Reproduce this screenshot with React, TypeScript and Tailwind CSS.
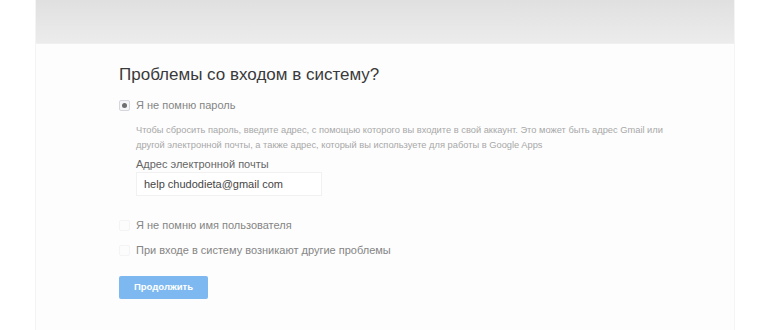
import { useState } from 'react'

const options = [
  { id: 'password', label: 'Я не помню пароль' },
  { id: 'username', label: 'Я не помню имя пользователя' },
  { id: 'other', label: 'При входе в систему возникают другие проблемы' },
]

function Radio({ checked }: { checked: boolean }) {
  return (
    <span
      className={`flex h-[11px] w-[11px] items-center justify-center rounded-[2px] border ${
        checked ? 'border-[#d6d6de] bg-[#f6f6f8]' : 'border-[#f4f4f4] bg-[#fcfcfc]'
      }`}
    >
      {checked && <span className="h-[5px] w-[5px] rounded-full bg-[#6f6f6f]" />}
    </span>
  )
}

export default function App() {
  const [choice, setChoice] = useState('password')
  const [email, setEmail] = useState('help chudodieta@gmail com')

  return (
    <div className="h-[330px] w-[770px] bg-white" style={{ fontFamily: '"Liberation Sans", Arial, sans-serif' }}>
      <div className="mx-auto h-full w-[700px] border-x border-[#f4f4f4] bg-[#fdfdfd]">
        <div className="h-[44px] border-b border-[#f0f0f0] bg-gradient-to-b from-[#e0e0e0] to-[#ececec]" />

        <div className="pl-[83px] pt-[20px]">
          <h1 className="text-[17px] leading-[22px] text-[#3a3a3a]">Проблемы со входом в систему?</h1>

          <div className="mt-[12px]">
            {options.map((o) => (
              <div key={o.id} className={o.id === 'password' ? '' : 'mt-[11px]'}>
                <label className="flex h-[14px] cursor-pointer items-center gap-[6px]" onClick={() => setChoice(o.id)}>
                  <Radio checked={choice === o.id} />
                  <span className="text-[11px] text-[#858585]">{o.label}</span>
                </label>

                {o.id === 'password' && choice === 'password' && (
                  <div className="mb-[22px] pl-[17px] pt-[11px]">
                    <p className="whitespace-nowrap text-[9.3px] leading-[15px] text-[#a8a8a8]">
                      Чтобы сбросить пароль, введите адрес, с помощью которого вы входите в свой аккаунт. Это может быть адрес Gmail или
                      <br />
                      другой электронной почты, а также адрес, который вы используете для работы в Google Apps
                    </p>
                    <div className="mt-[4px] text-[11px] leading-[14px] text-[#666]">Адрес электронной почты</div>
                    <input
                      value={email}
                      onChange={(e) => setEmail(e.target.value)}
                      className="mt-[1px] h-[24px] w-[186px] border border-[#f1f1f1] bg-white px-[7px] text-[11px] text-[#454545] outline-none"
                    />
                  </div>
                )}
              </div>
            ))}
          </div>

          <button className="mt-[19px] h-[23px] w-[89px] rounded-[2px] bg-[#7db9f0] text-[9.5px] font-bold text-white">
            Продолжить
          </button>
        </div>
      </div>
    </div>
  )
}
